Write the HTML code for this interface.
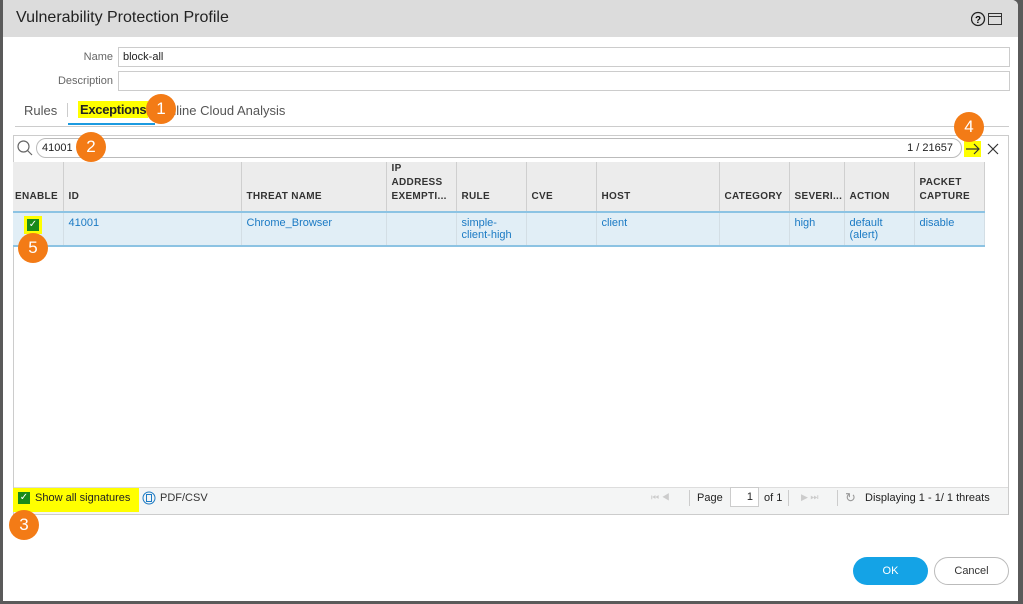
<!DOCTYPE html>
<html><head><style>
*{box-sizing:border-box;margin:0;padding:0}
body{width:1023px;height:604px;background:#5a5a5a;font-family:"Liberation Sans",sans-serif;position:relative;overflow:hidden;font-size:11px;color:#333}
.dlg{position:absolute;left:3px;top:0;width:1015px;height:601px;background:#fff;border-radius:0 6px 0 0}
.hdr{position:absolute;left:0;top:0;width:1015px;height:37px;background:#dcdcdc;border-radius:0 6px 0 0}
.hdr span{position:absolute;left:13px;top:9px;font-size:16px;color:#222}
.abs{position:absolute}
.lbl{position:absolute;color:#666;font-size:11px;text-align:right;width:110px}
.inp{position:absolute;border:1px solid #ccc;height:20px;background:#fff}
.badge{position:absolute;width:30px;height:30px;border-radius:50%;background:#f37b16;color:#fff;font-size:17px;text-align:center;line-height:30px}
.hl{background:#ffff00}
table{border-collapse:collapse;position:absolute;left:10px;top:162px;table-layout:fixed;width:971px}
th{background:#ececec;border-right:1px solid #cfcfcf;height:49px;vertical-align:bottom;text-align:left;font-size:10px;font-weight:bold;letter-spacing:.3px;padding:0 5px 7px;color:#333;line-height:14px;overflow:hidden;white-space:normal}
td{background:#e1eef6;border-right:1px solid #d3dee5;height:33px;vertical-align:top;padding:4px 5px;color:#1b7ac4;font-size:11px;line-height:12px;border-top:2px solid #8cc3e3;border-bottom:2px solid #8cc3e3;overflow:hidden}
</style></head><body>
<div class="dlg">
<div class="hdr"><span>Vulnerability Protection Profile</span>
<svg class="abs" style="left:968px;top:11px" width="36" height="16"><circle cx="7" cy="8" r="6.5" fill="none" stroke="#222" stroke-width="1.3"/><text x="4" y="12" font-size="10" font-weight="bold" font-family="Liberation Sans">?</text><rect x="17.5" y="2.5" width="13" height="11" fill="none" stroke="#333"/><line x1="17.5" y1="5.5" x2="30.5" y2="5.5" stroke="#333"/></svg></div>
<div class="lbl" style="left:0;top:51px">Name</div>
<div class="inp" style="left:115px;top:47px;width:892px;padding:3px 4px;color:#222">block-all</div>
<div class="lbl" style="left:0;top:75px">Description</div>
<div class="inp" style="left:115px;top:71px;width:892px"></div>
<div class="abs" style="left:21px;top:103px;font-size:13px;color:#555">Rules</div>
<div class="abs" style="left:64px;top:103px;width:1px;height:14px;background:#ccc"></div>
<div class="abs hl" style="left:75px;top:101px;font-size:13px;font-weight:bold;color:#222;padding:1px 2px;letter-spacing:-0.3px">Exceptions</div>
<div class="abs" style="left:65px;top:123px;width:87px;height:2px;background:#1b9ae0"></div>
<div class="abs" style="left:12px;top:126px;width:994px;height:1px;background:#ccc"></div>
<div class="abs" style="left:166px;top:103px;font-size:13px;color:#555">nline Cloud Analysis</div>
<div class="badge" style="left:143px;top:94px">1</div>
<div class="abs" style="left:10px;top:135px;width:996px;height:380px;border:1px solid #ccc"></div>
<svg class="abs" style="left:13px;top:139px" width="18" height="18"><circle cx="7.5" cy="7.5" r="5.5" fill="none" stroke="#666" stroke-width="1.2"/><line x1="11.5" y1="11.5" x2="16" y2="16" stroke="#666" stroke-width="1.2"/></svg>
<div class="abs" style="left:33px;top:138px;width:926px;height:20px;border:1px solid #bbb;border-radius:10px;padding:3px 5px;color:#222">41001<span style="position:absolute;right:8px">1 / 21657</span></div>
<div class="badge" style="left:73px;top:132px">2</div>
<div class="abs hl" style="left:961px;top:141px;width:17px;height:16px"></div>
<svg class="abs" style="left:961px;top:141px" width="40" height="16"><path d="M2 8H15M10 3L15 8L10 13" fill="none" stroke="#333" stroke-width="1.2"/><path d="M24 3L34 13M34 3L24 13" stroke="#333" stroke-width="1.2"/></svg>
<div class="badge" style="left:951px;top:112px">4</div>
<table>
<colgroup><col width="50"><col width="178"><col width="145"><col width="70"><col width="70"><col width="70"><col width="123"><col width="70"><col width="55"><col width="70"><col width="70"></colgroup>
<tr><th style="padding-left:2px">ENABLE</th><th>ID</th><th>THREAT NAME</th><th>IP ADDRESS EXEMPTI...</th><th>RULE</th><th>CVE</th><th>HOST</th><th>CATEGORY</th><th style="white-space:nowrap">SEVERI...</th><th>ACTION</th><th>PACKET CAPTURE</th></tr>
<tr><td><div class="hl" style="width:18px;height:18px;margin-left:6px;margin-top:-1px;padding:3px"><div style="width:12px;height:12px;background:#1a8a1a;color:#fff;font-size:10px;line-height:12px;text-align:center">✓</div></div></td><td>41001</td><td>Chrome_Browser</td><td></td><td>simple-client-high</td><td></td><td>client</td><td></td><td>high</td><td>default (alert)</td><td>disable</td></tr>
</table>
<div class="badge" style="left:15px;top:233px">5</div>
<div class="abs" style="left:11px;top:487px;width:994px;height:27px;background:#f4f5f5;border-top:1px solid #ddd"></div>
<div class="abs hl" style="left:10px;top:488px;width:126px;height:24px"></div>
<div class="abs" style="left:15px;top:492px;width:12px;height:12px;background:#1a8a1a;color:#fff;font-size:10px;line-height:12px;text-align:center">✓</div>
<div class="abs" style="left:32px;top:492px;color:#222">Show all signatures</div>
<svg class="abs" style="left:139px;top:491px" width="14" height="14"><circle cx="7" cy="7" r="6" fill="none" stroke="#1b7ac4"/><rect x="4.5" y="3.5" width="5" height="7" fill="none" stroke="#1b7ac4"/></svg>
<div class="abs" style="left:157px;top:492px;color:#333">PDF/CSV</div>
<div class="abs" style="left:648px;top:492px;color:#ccc;font-size:9px">⏮ ◀</div>
<div class="abs" style="left:686px;top:490px;width:1px;height:16px;background:#ccc"></div>
<div class="abs" style="left:694px;top:492px;color:#222">Page</div>
<div class="abs" style="left:727px;top:487px;width:29px;height:20px;border:1px solid #ccc;background:#fff;text-align:right;padding:3px 5px;color:#222">1</div>
<div class="abs" style="left:761px;top:492px;color:#222">of 1</div>
<div class="abs" style="left:785px;top:490px;width:1px;height:16px;background:#ccc"></div>
<div class="abs" style="left:798px;top:492px;color:#ccc;font-size:9px">▶ ⏭</div>
<div class="abs" style="left:834px;top:490px;width:1px;height:16px;background:#ccc"></div>
<div class="abs" style="left:842px;top:490px;color:#999;font-size:13px">↻</div>
<div class="abs" style="left:862px;top:492px;color:#222">Displaying 1 - 1/ 1 threats</div>
<div class="badge" style="left:6px;top:510px">3</div>
<div class="abs" style="left:850px;top:557px;width:75px;height:28px;background:#14a3e6;border-radius:14px;color:#fff;text-align:center;line-height:28px;font-size:11px">OK</div>
<div class="abs" style="left:931px;top:557px;width:75px;height:28px;border:1px solid #bbb;border-radius:14px;color:#333;text-align:center;line-height:26px;font-size:11px">Cancel</div>
</div>
</body></html>
